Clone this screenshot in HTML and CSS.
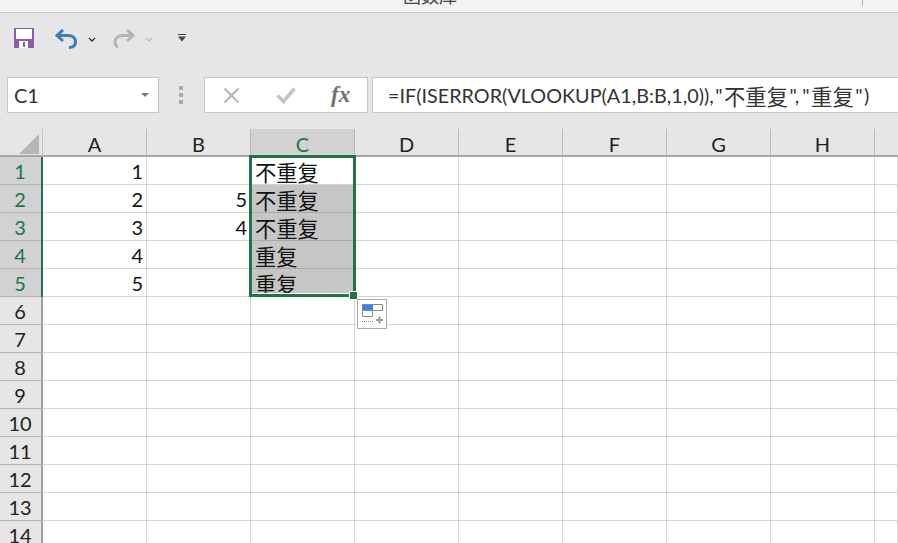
FILE: index.html
```html
<!DOCTYPE html>
<html>
    <head>
        <meta charset="utf-8">
        <title>Excel</title>
        <link rel="stylesheet" href="styles.css">
    </head>
    <body>
        <div class="ribbon-strip">
            <span class="group-label">函数库</span>
            <span class="group-sep"></span>
        </div>

        <div class="qat">
            <svg class="ico-save" width="20" height="20" viewBox="0 0 20 20">
                <path fill="#8b5cab" d="M0 1a1 1 0 0 1 1-1h18a1 1 0 0 1 1 1v18a1 1 0 0 1-1 1H1a1 1 0 0 1-1-1z"/>
                <path fill="#fff" d="M2 1h16v10H2zM5 13h9v7H5z"/>
                <path fill="#8b5cab" d="M9 14h2v5H9z"/>
            </svg>
            <svg class="ico-undo" width="24" height="20" viewBox="0 0 24 20">
                <path fill="none" stroke="#3f7cb5" stroke-width="3" d="M8 1 2 6.500 8 12"/>
                <path fill="none" stroke="#3f7cb5" stroke-width="3" d="M2.500 6.500H13c5 0 7.500 3 7.500 6.500s-2.500 5.500-6.500 5.500"/>
            </svg>
            <svg class="ico-chev" width="8" height="5" viewBox="0 0 8 5">
                <path fill="none" stroke="#333" stroke-width="1.300" d="M1 1l3 3 3-3"/>
            </svg>
            <svg class="ico-redo" width="24" height="20" viewBox="0 0 24 20">
                <path fill="none" stroke="#b4b4b4" stroke-width="3" d="M15 1l6 5.500-6 5.500"/>
                <path fill="none" stroke="#b4b4b4" stroke-width="3" d="M20.500 6.500H11C6 6.500 3 9.500 3 13c0 2.500 1 4 2.500 5.500"/>
            </svg>
            <svg class="ico-chev off" width="8" height="5" viewBox="0 0 8 5">
                <path fill="none" stroke="#b4b4b4" stroke-width="1.200" d="M1 1l3 3 3-3"/>
            </svg>
            <svg class="ico-more" width="8" height="8" viewBox="0 0 8 8">
                <path fill="#444" d="M0 0h8v1H0zM0 2.500h8L4 7.500z"/>
            </svg>
        </div>

        <div class="formula-row">
            <div class="name-box">
                <span>C1</span>
                <i class="name-arrow"></i>
            </div>
            <div class="dots"><i></i><i></i><i></i></div>
            <div class="fx-box">
                <svg width="18" height="17" viewBox="0 0 18 17">
                    <path fill="none" stroke="#b9b9b9" stroke-width="2.200" d="M1.500 1.500l14 14M15.500 1.500l-14 14"/>
                </svg>
                <svg width="20" height="17" viewBox="0 0 20 17">
                    <path fill="none" stroke="#c4c4c4" stroke-width="3.500" d="M1.500 8.500l6 6 11-13"/>
                </svg>
                <span class="fx">fx</span>
            </div>
            <div class="formula-input">=IF(ISERROR(VLOOKUP(A1,B:B,1,0)),<span class="q">"</span><span class="cjk">不重复</span><span class="q">",</span><span class="q">"</span><span class="cjk">重复</span><span class="q">"</span>)</div>
        </div>

        <div class="sheet">
            <div class="corner"><i></i></div>
            <div class="col-h">A</div><div class="col-h">B</div><div class="col-h on">C</div><div class="col-h">D</div><div class="col-h">E</div><div class="col-h">F</div><div class="col-h">G</div><div class="col-h">H</div><div class="col-h end"></div>

            <div class="row-h on">1</div><div class="c num">1</div><div class="c"></div><div class="c txt">不重复</div><div class="c"></div><div class="c"></div><div class="c"></div><div class="c"></div><div class="c"></div><div class="c"></div>
            <div class="row-h on">2</div><div class="c num">2</div><div class="c num">5</div><div class="c txt sel">不重复</div><div class="c"></div><div class="c"></div><div class="c"></div><div class="c"></div><div class="c"></div><div class="c"></div>
            <div class="row-h on">3</div><div class="c num">3</div><div class="c num">4</div><div class="c txt sel">不重复</div><div class="c"></div><div class="c"></div><div class="c"></div><div class="c"></div><div class="c"></div><div class="c"></div>
            <div class="row-h on">4</div><div class="c num">4</div><div class="c"></div><div class="c txt sel">重复</div><div class="c"></div><div class="c"></div><div class="c"></div><div class="c"></div><div class="c"></div><div class="c"></div>
            <div class="row-h on">5</div><div class="c num">5</div><div class="c"></div><div class="c txt sel">重复</div><div class="c"></div><div class="c"></div><div class="c"></div><div class="c"></div><div class="c"></div><div class="c"></div>
            <div class="row-h">6</div><div class="c"></div><div class="c"></div><div class="c"></div><div class="c"></div><div class="c"></div><div class="c"></div><div class="c"></div><div class="c"></div><div class="c"></div>
            <div class="row-h">7</div><div class="c"></div><div class="c"></div><div class="c"></div><div class="c"></div><div class="c"></div><div class="c"></div><div class="c"></div><div class="c"></div><div class="c"></div>
            <div class="row-h">8</div><div class="c"></div><div class="c"></div><div class="c"></div><div class="c"></div><div class="c"></div><div class="c"></div><div class="c"></div><div class="c"></div><div class="c"></div>
            <div class="row-h">9</div><div class="c"></div><div class="c"></div><div class="c"></div><div class="c"></div><div class="c"></div><div class="c"></div><div class="c"></div><div class="c"></div><div class="c"></div>
            <div class="row-h">10</div><div class="c"></div><div class="c"></div><div class="c"></div><div class="c"></div><div class="c"></div><div class="c"></div><div class="c"></div><div class="c"></div><div class="c"></div>
            <div class="row-h">11</div><div class="c"></div><div class="c"></div><div class="c"></div><div class="c"></div><div class="c"></div><div class="c"></div><div class="c"></div><div class="c"></div><div class="c"></div>
            <div class="row-h">12</div><div class="c"></div><div class="c"></div><div class="c"></div><div class="c"></div><div class="c"></div><div class="c"></div><div class="c"></div><div class="c"></div><div class="c"></div>
            <div class="row-h">13</div><div class="c"></div><div class="c"></div><div class="c"></div><div class="c"></div><div class="c"></div><div class="c"></div><div class="c"></div><div class="c"></div><div class="c"></div>
            <div class="row-h">14</div><div class="c"></div><div class="c"></div><div class="c"></div><div class="c"></div><div class="c"></div><div class="c"></div><div class="c"></div><div class="c"></div><div class="c"></div>

            <!-- selection frame, fill handle and paste options sit over the grid -->
            <div class="range-edge"></div>
            <div class="selection"><i class="handle"></i></div>
            <div class="paste-opts">
                <svg width="22" height="22" viewBox="0 0 22 22">
                    <path fill="#3f7ff0" d="M0 0h11v6H0z"/>
                    <path fill="none" stroke="#8a8a8a" d="M.5.500h20v6H.5zM.5 6.500h10v6H.5z"/>
                    <path fill="none" stroke="#8a8a8a" stroke-dasharray="1 1" d="M0 17.500h11"/>
                    <path fill="#9a9a9a" d="M14 15h2.500v-2.500h2V15H21v2h-2.500v2.500h-2V17H14z"/>
                </svg>
            </div>
        </div>
    </body>
</html>
```

FILE: styles.css
```css
html, body {
    margin: 0;
    padding: 0;
    height: 100%;
    overflow: hidden;
    background: #e6e6e6;
    color: #222;
    font-family: "Lato", "Noto Sans CJK SC", sans-serif;
}

.ribbon-strip {
    height: 12px;
    background: #f3f3f3;
    border-bottom: 1px solid #c9c9c9;
    overflow: hidden;
    display: flex;
    align-items: flex-end;
    font-size: 18px;
    line-height: 24px;
    color: #444;
}
.group-label { margin-left: 403px; margin-bottom: 4px; flex: none; }
.group-sep { width: 1px; height: 6px; margin-left: 405px; margin-bottom: 6px; background: #b0b0b0; flex: none; }

.qat {
    height: 64px;
    box-sizing: border-box;
    padding: 15px 0 0 14px;
    display: flex;
    align-items: flex-start;
}
.ico-undo { margin-left: 21px; margin-top: 1px; }
.ico-chev { margin-left: 9px; margin-top: 9px; }
.ico-redo { margin-left: 16px; margin-top: 1px; }
.ico-chev.off { margin-left: 9px; }
.ico-more { margin-left: 25px; margin-top: 6px; }

.formula-row {
    height: 36px;
    display: flex;
    padding-left: 7px;
    margin-bottom: 16px;
}
.name-box, .fx-box, .formula-input {
    box-sizing: border-box;
    background: #fff;
    border: 1px solid #c6c6c6;
    height: 36px;
    display: flex;
    align-items: center;
}
.name-box {
    width: 152px;
    padding: 0 9px 0 6px;
    justify-content: space-between;
    font-size: 20px;
    color: #333;
}
.name-arrow {
    border-top: 4px solid #777;
    border-left: 4px solid transparent;
    border-right: 4px solid transparent;
}
.dots {
    width: 43px;
    margin-right: 2px;
    display: flex;
    flex-direction: column;
    align-items: center;
    justify-content: center;
    gap: 3px;
}
.dots i { width: 4px; height: 4px; background: #a9a9a9; display: block; }
.fx-box {
    width: 164px;
    padding-left: 18px;
    gap: 35px;
}
.fx {
    margin-left: 0;
    font-family: "Liberation Serif", serif;
    font-style: italic;
    font-weight: bold;
    font-size: 23px;
    color: #707070;
}
.formula-input {
    flex: 1;
    margin-left: 4px;
    padding-left: 15px;
    border-right: 0;
    white-space: nowrap;
    font-size: 19.800px;
    color: #333;
}
.formula-input .cjk { font-size: 21.300px; }
.formula-input .q { margin: 0 1.500px; }

.sheet {
    position: relative;
    display: grid;
    grid-template-columns: 43px repeat(8, 104px) 23px;
    grid-template-rows: 28px repeat(14, 28px);
    background: #fff;
}
.corner { background: #e6e6e6; border-right: 1px solid #c4c4c4; border-bottom: 2px solid #a6a6a6; box-sizing: border-box; position: relative; }
.corner i {
    position: absolute;
    right: 3px;
    bottom: 1px;
    border-left: 20px solid transparent;
    border-bottom: 20px solid #b6b6b6;
}
.col-h, .row-h {
    background: #e6e6e6;
    box-sizing: border-box;
    display: flex;
    align-items: center;
    justify-content: center;
    font-size: 20px;
    color: #222;
}
.col-h { border-right: 1px solid #b8b8b8; border-bottom: 2px solid #a6a6a6; padding-top: 3px; }
.col-h.end { border-right: 0; }
.row-h { border-right: 2px solid #a0a0a0; border-bottom: 1px solid #b4b4b4; padding: 1px 1px 0 0; }
.col-h.on, .row-h.on { background: #d2d2d2; color: #217346; }
.c {
    box-sizing: border-box;
    border-right: 1px solid #d4d4d4;
    border-bottom: 1px solid #d4d4d4;
    display: flex;
    align-items: center;
    padding-top: 1px;
    font-size: 20px;
    color: #111;
}
.num { justify-content: flex-end; padding-right: 3px; }
.txt { padding-left: 4px; font-size: 21.300px; white-space: nowrap; }
.sel { background: #c6c6c6; border-bottom-color: #aaa; }

.range-edge {
    position: absolute;
    left: 41px;
    top: 28px;
    width: 2px;
    height: 140px;
    background: #217346;
}
.selection {
    position: absolute;
    left: 249px;
    top: 26px;
    width: 107px;
    height: 142px;
    box-sizing: border-box;
    border: 3px solid #217346;
    box-shadow: inset 0 -1px 0 #fff;
}
.handle {
    position: absolute;
    right: -5px;
    bottom: -6px;
    width: 7px;
    height: 7px;
    background: #217346;
    border: 1px solid #fff;
}
.paste-opts {
    position: absolute;
    left: 357px;
    top: 170px;
    width: 30px;
    height: 30px;
    box-sizing: border-box;
    padding: 4px;
    background: #fff;
    border: 1px solid #a8a8a8;
}
.paste-opts svg { display: block; }
```
